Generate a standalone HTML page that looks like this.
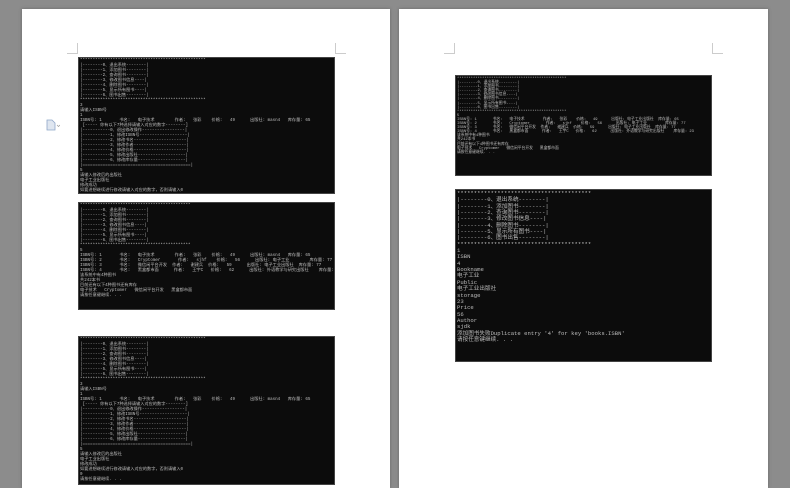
<!DOCTYPE html>
<html style="overflow:hidden;width:790px;height:488px"><head><meta charset="utf-8"><style>
*{margin:0;padding:0}
body{width:790px;height:488px;background:#8c8c8c;position:relative;overflow:hidden;font-family:"Liberation Mono","Noto Sans CJK SC",monospace}
.page{position:absolute;background:#fff;top:9px;height:479px;box-shadow:0 0 3px #666}
.con{position:absolute;background:#0c0c0c;color:#bdbdbd;white-space:pre;overflow:hidden;border:1px solid #444;box-sizing:border-box}
.s{font-size:4.2px;line-height:5px;padding:1px 1px}
.m{font-size:5.6px;line-height:6.35px;padding:1px 1px}
.cm{position:absolute;width:10px;height:10px;border-color:#ccc;border-style:solid;border-width:0}
</style></head><body>
<div class="page" style="left:22px;width:368px"></div>
<div class="page" style="left:399px;width:369px"></div>
<div class="cm" style="left:67px;top:43px;border-right-width:1px;border-bottom-width:1px"></div>
<div class="cm" style="left:335px;top:43px;border-left-width:1px;border-bottom-width:1px"></div>
<div class="cm" style="left:444px;top:43px;border-right-width:1px;border-bottom-width:1px"></div>
<div class="cm" style="left:712px;top:43px;border-left-width:1px;border-bottom-width:1px"></div>
<svg style="position:absolute;left:46px;top:119px" width="14" height="12"><path d="M1 1h5l3 3v7H1z" fill="#dfe6f0" stroke="#8fa6c8" stroke-width=".8"/><path d="M11 6l1.5 1.5L14 6" fill="none" stroke="#999" stroke-width=".7"/></svg>

<div class="con s" style="left:78px;top:57px;width:257px;height:137px">**************************************************
|--------0、退出系统--------|
|--------1、添加图书--------|
|--------2、查询图书--------|
|--------3、修改图书信息----|
|--------4、删除图书--------|
|--------5、显示所有图书----|
|--------6、图书出售--------|
**************************************************
3
请输入ISBN号
1
ISBN号: 1       书名:   电子技术        作者:   张彩    价格:   49      出版社: masn4   库存量: 65
 [----- 你有以下7种选择请输入对应的数字--------]
|-----------0、退出修改操作-----------------|
|-----------1、修改ISBN号-------------------|
|-----------2、修改书名---------------------|
|-----------3、修改作者---------------------|
|-----------4、修改价格---------------------|
|-----------5、修改出版社-------------------|
|-----------6、修改库存量-------------------|
|===========================================|
5
请输入修改后的出版社
电子工业出版社
修改成功
如要进想继续进行修改请输入对应的数字，否则请输入0</div>

<div class="con s" style="left:78px;top:202px;width:257px;height:108px">********************************************
|--------0、退出系统--------|
|--------1、添加图书--------|
|--------2、查询图书--------|
|--------3、修改图书信息----|
|--------4、删除图书--------|
|--------5、显示所有图书----|
|--------6、图书出售--------|
********************************************
5
ISBN号: 1       书名:   电子技术        作者:   张彩    价格:   49      出版社: masn4   库存量: 65
ISBN号: 2       书名:   Cryptomer       作者:   sjhf    价格:   56      出版社: 电子工业        库存量: 77
ISBN号: 3       书名:   微信闲平台开发  作者:   谢建兵  价格:   59      出版社: 电子工业出版社  库存量: 77
ISBN号: 4       书名:   黑盒都市面      作者:   王宇C   价格:   62      出版社: 外语教学与研究出版社    库存量: 23
该系统中有4种图书
共242本书
目前还有以下4种图书还有库存
电子技术   Cryptomer   微信闲平台开发   黑盒都市面
请按任意键继续. . .</div>

<div class="con s" style="left:78px;top:336px;width:257px;height:149px">**************************************************
|--------0、退出系统--------|
|--------1、添加图书--------|
|--------2、查询图书--------|
|--------3、修改图书信息----|
|--------4、删除图书--------|
|--------5、显示所有图书----|
|--------6、图书出售--------|
**************************************************
3
请输入ISBN号
1
ISBN号: 1       书名:   电子技术        作者:   张彩    价格:   49      出版社: masn4   库存量: 65
 [----- 你有以下7种选择请输入对应的数字--------]
|-----------0、退出修改操作-----------------|
|-----------1、修改ISBN号-------------------|
|-----------2、修改书名---------------------|
|-----------3、修改作者---------------------|
|-----------4、修改价格---------------------|
|-----------5、修改出版社-------------------|
|-----------6、修改库存量-------------------|
|===========================================|
5
请输入修改后的出版社
电子工业出版社
修改成功
如要进想继续进行修改请输入对应的数字，否则请输入0
0
请按任意键继续. . .</div>

<div class="con s" style="left:455px;top:75px;width:257px;height:101px;font-size:3.8px;line-height:4.1px">************************************************
|--------0、退出系统--------|
|--------1、添加图书--------|
|--------2、查询图书--------|
|--------3、修改图书信息----|
|--------4、删除图书--------|
|--------5、显示所有图书----|
|--------6、图书出售--------|
************************************************
5
ISBN号: 1       书名:   电子技术        作者:   张彩    价格:   49      出版社: 电子工业出版社  库存量: 65
ISBN号: 2       书名:   Cryptomer       作者:   sjhf    价格:   56      出版社: 电子工业        库存量: 77
ISBN号: 3       书名:   微信闲平台开发  作者:   谢建兵  价格:   59      出版社: 电子工业出版社  库存量: 77
ISBN号: 4       书名:   黑盒都市面      作者:   王宇C   价格:   62      出版社: 外语教学与研究出版社    库存量: 23
该系统中有4种图书
共242本书
目前还有以下4种图书还有库存
电子技术   Cryptomer   微信闲平台开发   黑盒都市面
请按任意键继续. . .</div>

<div class="con m" style="left:455px;top:189px;width:257px;height:173px">****************************************
|--------0、退出系统--------|
|--------1、添加图书--------|
|--------2、查询图书--------|
|--------3、修改图书信息----|
|--------4、删除图书--------|
|--------5、显示所有图书----|
|--------6、图书出售--------|
****************************************
1
ISBN
4
Bookname
电子工业
Public
电子工业出版社
storage
23
Price
56
Author
sjdk
添加图书失败Duplicate entry '4' for key 'books.ISBN'
请按任意键继续. . .</div>
</body></html>
